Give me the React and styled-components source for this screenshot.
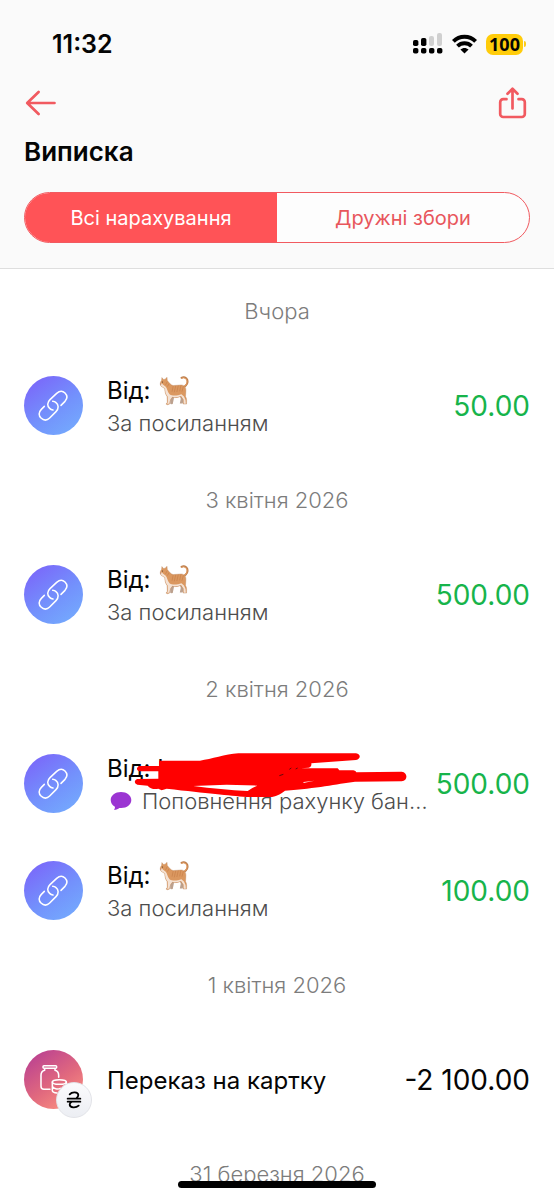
import React, { useState } from "react";
import styled, { createGlobalStyle, css } from "styled-components";

const GlobalStyle = createGlobalStyle`
  *, *::before, *::after { box-sizing: border-box; }
  body {
    margin: 0;
    background: #fff;
    color: #050505;
    font-family: Inter, "Liberation Sans", sans-serif;
  }
  button { font: inherit; }
`;

const Screen = styled.div`
  position: relative;
  display: flex;
  flex-direction: column;
  height: 100vh;
  overflow: hidden;
  background: #fff;
`;

const Header = styled.header`
  flex: none;
  padding: 24px 24px 25px;
  background: #fafafa;
  border-bottom: 1px solid #dedede;
`;

const StatusBar = styled.div`
  display: flex;
  align-items: center;
  justify-content: space-between;
  height: 40px;
  padding-left: 28px;
`;

const Clock = styled.time`
  font-size: 25px;
  font-weight: 600;
  line-height: 40px;
`;

const Indicators = styled.div`
  display: flex;
  align-items: center;
  gap: 9px;
  padding-right: 4px;
`;

const Battery = styled.div`
  display: flex;
  align-items: center;
  gap: 1px;

  &::after {
    content: "";
    width: 2px;
    height: 6px;
    border-radius: 0 2px 2px 0;
    background: #fbcb1c;
  }
`;

const BatteryLevel = styled.span`
  width: 37px;
  height: 21px;
  border-radius: 7px;
  background: #ffcc0a;
  font-family: "Noto Sans", sans-serif;
  font-size: 18px;
  font-weight: 700;
  line-height: 21px;
  text-align: center;
`;

const Toolbar = styled.nav`
  display: flex;
  align-items: center;
  justify-content: space-between;
  margin-top: 19px;
  height: 40px;
`;

const IconButton = styled.button`
  display: flex;
  padding: 0;
  border: 0;
  background: none;
  color: #f15a60;
  cursor: pointer;
`;

const Title = styled.h1`
  margin: 13px 0 24px;
  font-size: 26px;
  font-weight: 600;
  line-height: 32px;
`;

const Tabs = styled.div`
  display: grid;
  grid-template-columns: 1fr 1fr;
  height: 51px;
  overflow: hidden;
  border: 1px solid #f15a60;
  border-radius: 26px;
  background: #fdfdfd;
`;

const Tab = styled.button`
  padding: 0;
  border: 0;
  background: ${({ $active }) => ($active ? "#ff5357" : "transparent")};
  color: ${({ $active }) => ($active ? "#fff" : "#e8565c")};
  font-size: 20px;
  line-height: 28px;
  cursor: pointer;
`;

const List = styled.main`
  flex: 1;
  min-height: 0;
  padding-top: 1px;
  overflow-y: auto;
  scrollbar-width: none;
`;

const DateHeading = styled.h2`
  display: flex;
  align-items: center;
  justify-content: center;
  margin: 0;
  height: 82px;
  color: #7c7c7c;
  font-size: 22px;
  font-weight: 350;
  line-height: 28px;
`;

const Row = styled.article`
  display: flex;
  align-items: center;
  height: 107px;
  padding: 0 24px;
`;

const Avatar = styled.div`
  position: relative;
  display: flex;
  flex: none;
  width: 59px;
  height: 59px;
  margin-right: 24px;
  border-radius: 50%;
  ${({ $kind }) =>
    $kind === "jar"
      ? css`background: linear-gradient(145deg, #bd4490 12%, #e1697e 55%, #fb9080 90%);`
      : css`background: linear-gradient(145deg, #7a6afa 12%, #7391fc 55%, #74aafd 92%);`}
`;

const CurrencyBadge = styled.span`
  position: absolute;
  right: -9px;
  bottom: -9px;
  display: flex;
  align-items: center;
  justify-content: center;
  width: 36px;
  height: 36px;
  border: 1px solid #e2e3e8;
  border-radius: 50%;
  background: linear-gradient(#fbfbfd, #eceef3);
`;

const Details = styled.div`
  position: relative;
  flex: 1;
  min-width: 0;
  padding-top: 2px;
`;

const Name = styled.div`
  display: flex;
  align-items: center;
  gap: 8px;
  font-size: 24px;
  line-height: 32px;
  white-space: nowrap;
`;

const Note = styled.div`
  display: flex;
  align-items: center;
  gap: 10px;
  padding-left: ${({ $indent }) => ($indent ? "3px" : "0")};
  color: #4d4d4d;
  font-size: 22px;
  font-weight: 350;
  line-height: 32px;
  white-space: nowrap;
`;

const Amount = styled.div`
  flex: none;
  color: ${({ $income }) => ($income ? "#17b44b" : "#050505")};
  font-size: 28px;
  line-height: 36px;
  white-space: nowrap;
`;

const Scribble = styled.svg`
  position: absolute;
  left: 27px;
  top: -1px;
`;

const HomeIndicator = styled.div`
  position: absolute;
  bottom: 12px;
  left: 50%;
  width: 198px;
  height: 7px;
  margin-left: -99px;
  border-radius: 4px;
  background: #000;
`;

const SignalIcon = () => (
  <svg width="30" height="22" viewBox="0 0 30 22" aria-hidden="true">
    <g fill="#000">
      <rect x="0" y="7" width="5.4" height="6" rx="1.8" />
      <rect x="8" y="5" width="5.4" height="8" rx="1.8" />
      <rect x="0" y="15" width="5.4" height="5.6" rx="1.8" />
      <rect x="8" y="15" width="5.4" height="5.6" rx="1.8" />
      <rect x="16" y="15" width="5.4" height="5.6" rx="1.8" />
      <rect x="24" y="15" width="5.4" height="5.6" rx="1.8" />
    </g>
    <rect x="16" y="3" width="5" height="10" rx="2" fill="#d0d0d0" />
    <rect x="24" y="0" width="5" height="13" rx="2" fill="#d0d0d0" />
  </svg>
);

const WifiIcon = () => (
  <svg width="25" height="20" viewBox="0 0 25 20" aria-hidden="true">
    <g fill="none" stroke="#000" strokeWidth="3.9">
      <path d="M1.4 7.4C7.5 1.1 17.5 1.1 23.6 7.4" />
      <path d="M5.5 12.1C9.4 8.3 15.6 8.3 19.5 12.1" />
    </g>
    <path d="M12.5 19.6 8.4 15.6C10.8 13.3 14.2 13.3 16.6 15.6Z" />
  </svg>
);

const BackIcon = () => (
  <svg width="34" height="26" viewBox="0 0 34 26" fill="none" stroke="currentColor" strokeWidth="2.7" strokeLinecap="round" strokeLinejoin="round">
    <path d="M14.6 2 3.2 13l11.4 11M4 13h26.5" />
  </svg>
);

const ShareIcon = () => (
  <svg width="34" height="34" viewBox="0 0 34 34" fill="none" stroke="currentColor" strokeWidth="2.7" strokeLinecap="round" strokeLinejoin="round">
    <path d="M10.5 13.2H7.2a3 3 0 0 0-3 3v11.8a3 3 0 0 0 3 3h18.6a3 3 0 0 0 3-3V16.2a3 3 0 0 0-3-3h-3.3" />
    <path d="M16.5 22.5V3.2M11.5 7.8l5-5 5 5" />
  </svg>
);

const LinkIcon = () => (
  <svg width="59" height="59" viewBox="6 6 177 177" fill="none" stroke="#fff" strokeWidth="4.6" strokeLinecap="round" strokeLinejoin="round" aria-hidden="true">
    <path d="M67 97L58 106C49 115 50 126 57 132C65 140 75 140 83 132L102 113C111 104 110 92 102 86Q98 82 92 82" />
    <path d="M93 108Q87 107 83 103C75 96 75 86 84 77L104 58C113 50 122 50 129 57C136 64 136 74 129 82L117 94" />
  </svg>
);

const JarIcon = () => (
  <svg width="59" height="59" viewBox="6 6 177 177" fill="none" stroke="#fff" strokeWidth="4.6" strokeLinecap="round" strokeLinejoin="round" aria-hidden="true">
    <rect x="63" y="53" width="41" height="8" rx="3" />
    <path d="M68 62V67C61 69 57 74 57 82V115Q57 124 66 124H84M99 62V67C106 69 110 74 110 82V88" />
    <ellipse cx="112" cy="102" rx="21" ry="7" />
    <path d="M91 102V128Q92 134 105 135M91 115C94 123 108 125 115 121M133 102V110" />
  </svg>
);

const HryvniaIcon = () => (
  <svg width="16" height="18" viewBox="132 133 48 54" fill="none" stroke="#000" strokeWidth="5.5" strokeLinecap="round" role="img" aria-label="₴">
    <path d="M143 143C150 135 168 135 169 145Q169 150 163 155M149 165Q143 169 143 174C144 184 162 184 170 177M137 156H175M137 165H175" />
  </svg>
);

const ChatIcon = () => (
  <svg width="22" height="20" viewBox="0 0 21 20" aria-hidden="true">
    <path d="M10.5 1C4.8 1 .2 4.4.2 9c0 3 1.7 5.3 4.2 6.7.2 1.2-.2 2.2-1 3 2.7 0 4.2-.8 5.4-1.8 6.7.8 12-2.8 12-7.9C20.8 4.4 16.2 1 10.500 1Z" fill="#9b35d2" />
  </svg>
);

const CatIcon = () => (
  <svg width="32" height="32" viewBox="8 6 100 100" aria-hidden="true">
    <path d="M85 44C95 38 99 29 97 22C94 13 85 11 78 15" fill="none" stroke="#b97c4c" strokeWidth="5.5" strokeLinecap="round" />
    <path d="M85 43C94 37 97 28 95 22C92 15 84 13 79 16" fill="none" stroke="#e0995f" strokeWidth="3.500" strokeLinecap="round" />
    <path d="M43 70L43 94Q42 98 51 97L56 72ZM71 68L76 80 73 95 82 95 87 74Z" fill="#bca18e" />
    <path d="M16 23L17 14 22 20 27 19 33 13 34 23C39 29 44 37 52 39L78 37C89 38 93 46 92 57L91 73C96 80 94 89 94 97H84L84 84 76 73C66 77 56 78 50 75L43 84 41 97Q34 101 30 97L34 91 33 73C27 65 26 56 26 48L17 43C11 39 10 30 16 23Z" fill="#db9860" stroke="#b17e58" strokeWidth="1" strokeLinejoin="round" />
    <path d="M14 33Q18 31 20 36L29 43C34 48 34 60 41 66C52 74 68 69 78 66L86 73 91 84 92 96H86L85 83 77 72C66 76 56 77 50 74L43 83 40 96H33L36 90 35 73C28 65 27 56 27 48L17 42Q13 39 14 33Z" fill="#f4e2d4" />
    <path d="M52 42L49 57M60 41L56 59M68 40L64 58M76 40L73 56M84 42L80 57M33 28L29 36M39 34L35 41" fill="none" stroke="#bd7440" strokeOpacity=".6" strokeWidth="2.400" strokeLinecap="round" />
    <circle cx="19" cy="28" r="1.700" fill="#433126" />
    <path d="M12 34L15 35" stroke="#a65f51" strokeWidth="2" />
  </svg>
);

const Redaction = () => (
  <Scribble width="276" height="50" viewBox="132 150 828 150" aria-hidden="true">
    <g transform="translate(0 120)" fill="#ff0000">
      <path d="M207 62H330C365 57 405 43 445 40H798C813 42 813 57 798 60L664 70C665 78 662 82 656 83L633 85H743L748 91H790Q798 92 799 97L935 95C954 97 954 122 935 124L795 125C738 132 682 145 585 152C568 164 558 170 540 171H470C414 166 355 160 230 146L215 151 205 146C193 149 180 146 173 137L142 134C132 131 132 120 142 117L205 116V94H149C138 92 138 81 149 78H207Z" />
      <path d="M310 138L410 134 502 137Q485 143 473 153C420 151 366 145 310 138Z" fill="#fff" />
      <path d="M641 126L673 122 640 129Z" fill="#fff" />
      <path d="M568 107L580 103M598 88L604 84M617 87L623 84" fill="none" stroke="#111" strokeWidth="2" />
    </g>
  </Scribble>
);

const groups = [
  { date: "Вчора", items: [{ name: "Від:", cat: true, note: "За посиланням", amount: "50.00" }] },
  { date: "3 квітня 2026", items: [{ name: "Від:", cat: true, note: "За посиланням", amount: "500.00" }] },
  {
    date: "2 квітня 2026",
    items: [
      { name: "Від: І", hidden: true, message: true, note: "Поповнення рахунку бан…", amount: "500.00" },
      { name: "Від:", cat: true, note: "За посиланням", amount: "100.00" },
    ],
  },
  { date: "1 квітня 2026", items: [{ name: "Переказ на картку", jar: true, amount: "-2 100.00" }] },
  { date: "31 березня 2026", items: [] },
];

const Transaction = ({ item }) => (
  <Row>
    <Avatar $kind={item.jar ? "jar" : "link"}>
      {item.jar ? <JarIcon /> : <LinkIcon />}
      {item.jar && <CurrencyBadge><HryvniaIcon /></CurrencyBadge>}
    </Avatar>
    <Details>
      <Name>{item.name}{item.cat && <CatIcon />}</Name>
      {item.note && (
        <Note $indent={item.message}>
          {item.message && <ChatIcon />}
          {item.note}
        </Note>
      )}
      {item.hidden && <Redaction />}
    </Details>
    <Amount $income={!item.jar}>{item.amount}</Amount>
  </Row>
);

export default function App() {
  const [tab, setTab] = useState(0);
  return (
    <>
      <GlobalStyle />
      <Screen>
        <Header>
          <StatusBar>
            <Clock>11:32</Clock>
            <Indicators>
              <SignalIcon />
              <WifiIcon />
              <Battery><BatteryLevel>100</BatteryLevel></Battery>
            </Indicators>
          </StatusBar>
          <Toolbar>
            <IconButton aria-label="Назад"><BackIcon /></IconButton>
            <IconButton aria-label="Поділитися"><ShareIcon /></IconButton>
          </Toolbar>
          <Title>Виписка</Title>
          <Tabs role="tablist">
            {["Всі нарахування", "Дружні збори"].map((label, i) => (
              <Tab key={label} role="tab" aria-selected={tab === i} $active={tab === i} onClick={() => setTab(i)}>
                {label}
              </Tab>
            ))}
          </Tabs>
        </Header>
        <List>
          {groups.map((group) => (
            <section key={group.date}>
              <DateHeading>{group.date}</DateHeading>
              {group.items.map((item, i) => <Transaction key={i} item={item} />)}
            </section>
          ))}
        </List>
        <HomeIndicator />
      </Screen>
    </>
  );
}
